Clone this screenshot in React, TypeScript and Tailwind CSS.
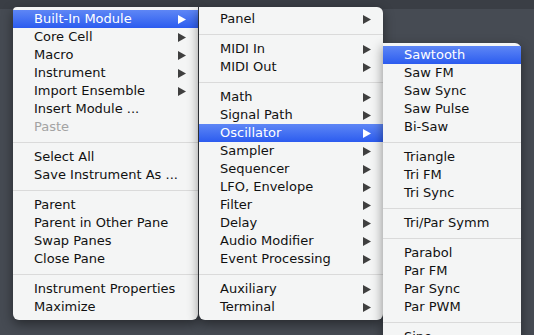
import React from "react";

type Item =
  | { label: string; sub?: boolean; disabled?: boolean; active?: boolean }
  | "sep";

// context menu cascade: main menu -> Built-In Module -> Oscillator
const mainItems: Item[] = [
  { label: "Built-In Module", sub: true, active: true },
  { label: "Core Cell", sub: true },
  { label: "Macro", sub: true },
  { label: "Instrument", sub: true },
  { label: "Import Ensemble", sub: true },
  { label: "Insert Module ..." },
  { label: "Paste", disabled: true },
  "sep",
  { label: "Select All" },
  { label: "Save Instrument As ..." },
  "sep",
  { label: "Parent" },
  { label: "Parent in Other Pane" },
  { label: "Swap Panes" },
  { label: "Close Pane" },
  "sep",
  { label: "Instrument Properties" },
  { label: "Maximize" },
];

const moduleItems: Item[] = [
  { label: "Panel", sub: true },
  "sep",
  { label: "MIDI In", sub: true },
  { label: "MIDI Out", sub: true },
  "sep",
  { label: "Math", sub: true },
  { label: "Signal Path", sub: true },
  { label: "Oscillator", sub: true, active: true },
  { label: "Sampler", sub: true },
  { label: "Sequencer", sub: true },
  { label: "LFO, Envelope", sub: true },
  { label: "Filter", sub: true },
  { label: "Delay", sub: true },
  { label: "Audio Modifier", sub: true },
  { label: "Event Processing", sub: true },
  "sep",
  { label: "Auxiliary", sub: true },
  { label: "Terminal", sub: true },
];

const oscItems: Item[] = [
  { label: "Sawtooth", active: true },
  { label: "Saw FM" },
  { label: "Saw Sync" },
  { label: "Saw Pulse" },
  { label: "Bi-Saw" },
  "sep",
  { label: "Triangle" },
  { label: "Tri FM" },
  { label: "Tri Sync" },
  "sep",
  { label: "Tri/Par Symm" },
  "sep",
  { label: "Parabol" },
  { label: "Par FM" },
  { label: "Par Sync" },
  { label: "Par PWM" },
  "sep",
  { label: "Sine" },
];

function Arrow({ white }: { white?: boolean }) {
  return (
    <svg width="8" height="9" viewBox="0 0 8 9">
      <path d="M0 0L8 4.5L0 9Z" fill={white ? "#ffffff" : "#3f3f3f"} />
    </svg>
  );
}

function Menu({ items, className }: { items: Item[]; className: string }) {
  return (
    <div
      className={
        "absolute flex flex-col bg-[#f4f5f5] pt-[3px] pb-[4px] shadow-[0_4px_12px_rgba(0,0,0,0.45)] " +
        className
      }
    >
      {items.map((it, i) =>
        it === "sep" ? (
          <div key={i} className="flex h-[12px] items-center">
            <div className="h-px w-full bg-[#dadada]" />
          </div>
        ) : (
          <div
            key={i}
            className={
              "flex h-[18px] items-center justify-between pl-[21px] pr-[12px] " +
              (it.active
                ? "bg-gradient-to-b from-[#5e86f5] to-[#2c5bef] text-white"
                : it.disabled
                  ? "text-[#a3a3a3]"
                  : "text-[#111111]")
            }
          >
            <span className="whitespace-nowrap">{it.label}</span>
            {it.sub && <Arrow white={it.active} />}
          </div>
        ),
      )}
    </div>
  );
}

export default function App() {
  return (
    <div className="relative h-[335px] w-[534px] overflow-hidden bg-[#464b53] font-['DejaVu_Sans',sans-serif] text-[13px] leading-[18px]">
      <div className="h-[9px] bg-[#3a3e45]" />
      <Menu
        items={mainItems}
        className="left-[13px] top-[7px] z-10 w-[185px] rounded-b-[6px] rounded-tl-[4px]"
      />
      <Menu
        items={moduleItems}
        className="left-[199px] top-[7px] z-20 w-[184px] rounded-b-[6px] rounded-tr-[6px]"
      />
      <Menu
        items={oscItems}
        className="left-[383px] top-[43px] z-30 w-[138px] rounded-tr-[6px]"
      />
    </div>
  );
}
